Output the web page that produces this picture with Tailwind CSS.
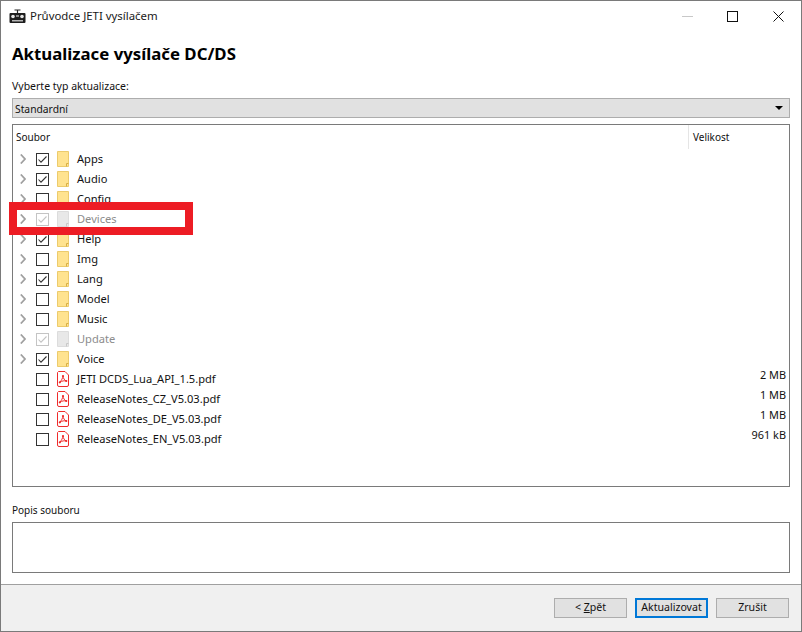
<!DOCTYPE html>
<html lang="cs">
<head>
  <title>Průvodce JETI vysílačem</title>
  <meta charset="utf-8">
  <meta name="viewport" content="width=device-width, initial-scale=1">
  <script src="https://cdn.jsdelivr.net/npm/@tailwindcss/browser@4"></script>
</head>
<body class="bg-white">
  <svg class="hidden">
    <symbol id="chevron" viewBox="0 0 6 10"><path d="M0.8 0.5 5 5 0.8 9.5" fill="none" stroke="#a0a0a0" stroke-width="1.8"/></symbol>
    <symbol id="box" viewBox="0 0 13 13"><rect x="0.5" y="0.5" width="12" height="12" fill="#fff" stroke="#333"/></symbol>
    <symbol id="checked" viewBox="0 0 13 13"><rect x="0.5" y="0.5" width="12" height="12" fill="#fff" stroke="#333"/><path d="M2.5 6.5 5 9.2 10.5 3.5" fill="none" stroke="#333" stroke-width="1.1"/></symbol>
    <symbol id="checked-off" viewBox="0 0 13 13"><rect x="0.5" y="0.5" width="12" height="12" fill="#fff" stroke="#c4c4c4"/><path d="M2.5 6.5 5 9.2 10.5 3.5" fill="none" stroke="#c4c4c4" stroke-width="1.1"/></symbol>
    <symbol id="folder" viewBox="0 0 12 16"><path d="M0.5 0.5H11.5V15.5H0.5Z" fill="#ffe38f" stroke="#eccb6c"/><path d="M9.5 15.5V12.5H11.5" fill="#ffe38f" stroke="#d8ae45"/></symbol>
    <symbol id="folder-off" viewBox="0 0 12 16"><path d="M0.5 0.5H11.5V15.5H0.5Z" fill="#e8e8e8" stroke="#dcdcdc"/><path d="M9.5 15.5V12.5H11.5" fill="#e8e8e8" stroke="#c8c8c8"/></symbol>
    <symbol id="pdf" viewBox="0 0 12 16"><path d="M1.5 0.5H8L11.5 4V14A1.5 1.5 0 0 1 10 15.500H2A1.500 1.500 0 0 1 0.500 14V1.500Z" fill="#fff" stroke="#ef2b2b"/><path d="M6 5C5.700 7 4.500 9.500 2.800 11.300 M6 5C6.200 7 7.500 9.500 9.300 10 M2.800 11.300C5 9.800 7.500 9.500 9.300 10" fill="none" stroke="#ef2b2b" stroke-width="1"/><circle cx="2.800" cy="11.300" r="1.100" fill="#ef2b2b"/><circle cx="9.300" cy="10" r="1.100" fill="#ef2b2b"/><circle cx="6" cy="5" r="1.100" fill="#ef2b2b"/></symbol>
  </svg>

  <div class="relative w-[802px] h-[632px] flex flex-col border border-[#7a7a7a] font-['Noto_Sans',sans-serif] text-[11.1px] text-[#111] overflow-hidden">
    <!-- title bar -->
    <div class="flex items-center h-[30px] shrink-0">
      <svg class="ml-[8px] w-[17px] h-[15px]" viewBox="0 0 17 15">
        <path d="M5.500 1H11.500M8.500 1V4" fill="none" stroke="#222" stroke-width="1.200"/>
        <rect x="0.500" y="4" width="16" height="10" rx="1" fill="#1d1d1d"/>
        <circle cx="4" cy="7.500" r="1.800" fill="#e6e6e6"/>
        <circle cx="13" cy="7.500" r="1.800" fill="#e6e6e6"/>
        <rect x="7" y="6" width="3" height="2" fill="#8a8a8a"/>
        <rect x="3" y="11" width="11" height="1.500" fill="#b5b5b5"/>
      </svg>
      <span class="ml-[4px] text-[11.4px] text-[#1a1a1a]">Průvodce JETI vysílačem</span>
      <div class="ml-auto flex items-center">
        <svg class="w-[11px] h-[11px] mr-[34px]" viewBox="0 0 11 11"><path d="M0 5.500H11" stroke="#c8c8c8"/></svg>
        <svg class="w-[11px] h-[11px] mr-[35px]" viewBox="0 0 11 11"><rect x="0.500" y="0.500" width="10" height="10" fill="none" stroke="#111"/></svg>
        <svg class="w-[11px] h-[11px] mr-[17px]" viewBox="0 0 11 11"><path d="M0.500 0.500 10.500 10.500M10.500 0.500 0.500 10.500" fill="none" stroke="#111"/></svg>
      </div>
    </div>

    <!-- content -->
    <div class="flex flex-col flex-1 px-[11px]">
      <h1 class="mt-[10px] h-[26px] leading-[26px] text-[16.8px] font-bold text-black">Aktualizace vysílače DC/DS</h1>
      <div class="mt-[10px] h-[18px] leading-[18px] text-[10.500px]">Vyberte typ aktualizace:</div>
      <div class="mt-[3px] h-[20px] flex items-center justify-between bg-[#e1e1e1] border border-[#adadad] w-[778px] pl-[2px] pr-[6px]">
        <span class="text-[10.300px] mt-[3px]">Standardní</span>
        <span class="w-0 h-0 border-x-[4px] border-x-transparent border-t-[4px] border-t-black"></span>
      </div>

      <div class="mt-[6px] h-[363px] w-[778px] border border-[#7a7a7a] flex flex-col">
        <div class="flex h-[24px] shrink-0 text-[10px]">
          <div class="w-[675px] pl-[3px] leading-[24px]">Soubor</div>
          <div class="flex-1 border-l border-[#e5e5e5] pl-[4px] leading-[24px]">Velikost</div>
        </div>
        <div class="flex items-center h-[20px]"><svg class="ml-[7px] w-[6px] h-[10px]"><use href="#chevron"/></svg><svg class="ml-[10px] w-[13px] h-[13px]"><use href="#checked"/></svg><svg class="ml-[8px] w-[12px] h-[16px]"><use href="#folder"/></svg><span class="ml-[8px]">Apps</span></div>
        <div class="flex items-center h-[20px]"><svg class="ml-[7px] w-[6px] h-[10px]"><use href="#chevron"/></svg><svg class="ml-[10px] w-[13px] h-[13px]"><use href="#checked"/></svg><svg class="ml-[8px] w-[12px] h-[16px]"><use href="#folder"/></svg><span class="ml-[8px]">Audio</span></div>
        <div class="flex items-center h-[20px]"><svg class="ml-[7px] w-[6px] h-[10px]"><use href="#chevron"/></svg><svg class="ml-[10px] w-[13px] h-[13px]"><use href="#box"/></svg><svg class="ml-[8px] w-[12px] h-[16px]"><use href="#folder"/></svg><span class="ml-[8px]">Config</span></div>
        <div class="flex items-center h-[20px]"><svg class="ml-[7px] w-[6px] h-[10px]"><use href="#chevron"/></svg><svg class="ml-[10px] w-[13px] h-[13px]"><use href="#checked-off"/></svg><svg class="ml-[8px] w-[12px] h-[16px]"><use href="#folder-off"/></svg><span class="ml-[8px] text-[#8c8c8c]">Devices</span></div>
        <div class="flex items-center h-[20px]"><svg class="ml-[7px] w-[6px] h-[10px]"><use href="#chevron"/></svg><svg class="ml-[10px] w-[13px] h-[13px]"><use href="#checked"/></svg><svg class="ml-[8px] w-[12px] h-[16px]"><use href="#folder"/></svg><span class="ml-[8px]">Help</span></div>
        <div class="flex items-center h-[20px]"><svg class="ml-[7px] w-[6px] h-[10px]"><use href="#chevron"/></svg><svg class="ml-[10px] w-[13px] h-[13px]"><use href="#box"/></svg><svg class="ml-[8px] w-[12px] h-[16px]"><use href="#folder"/></svg><span class="ml-[8px]">Img</span></div>
        <div class="flex items-center h-[20px]"><svg class="ml-[7px] w-[6px] h-[10px]"><use href="#chevron"/></svg><svg class="ml-[10px] w-[13px] h-[13px]"><use href="#checked"/></svg><svg class="ml-[8px] w-[12px] h-[16px]"><use href="#folder"/></svg><span class="ml-[8px]">Lang</span></div>
        <div class="flex items-center h-[20px]"><svg class="ml-[7px] w-[6px] h-[10px]"><use href="#chevron"/></svg><svg class="ml-[10px] w-[13px] h-[13px]"><use href="#box"/></svg><svg class="ml-[8px] w-[12px] h-[16px]"><use href="#folder"/></svg><span class="ml-[8px]">Model</span></div>
        <div class="flex items-center h-[20px]"><svg class="ml-[7px] w-[6px] h-[10px]"><use href="#chevron"/></svg><svg class="ml-[10px] w-[13px] h-[13px]"><use href="#box"/></svg><svg class="ml-[8px] w-[12px] h-[16px]"><use href="#folder"/></svg><span class="ml-[8px]">Music</span></div>
        <div class="flex items-center h-[20px]"><svg class="ml-[7px] w-[6px] h-[10px]"><use href="#chevron"/></svg><svg class="ml-[10px] w-[13px] h-[13px]"><use href="#checked-off"/></svg><svg class="ml-[8px] w-[12px] h-[16px]"><use href="#folder-off"/></svg><span class="ml-[8px] text-[#8c8c8c]">Update</span></div>
        <div class="flex items-center h-[20px]"><svg class="ml-[7px] w-[6px] h-[10px]"><use href="#chevron"/></svg><svg class="ml-[10px] w-[13px] h-[13px]"><use href="#checked"/></svg><svg class="ml-[8px] w-[12px] h-[16px]"><use href="#folder"/></svg><span class="ml-[8px]">Voice</span></div>
        <div class="flex items-center h-[20px]"><svg class="ml-[23px] w-[13px] h-[13px]"><use href="#box"/></svg><svg class="ml-[8px] w-[12px] h-[16px]"><use href="#pdf"/></svg><span class="ml-[8px]">JETI DCDS_Lua_API_1.5.pdf</span><span class="ml-auto mr-[3px] mb-[7px] text-[10.900px]">2 MB</span></div>
        <div class="flex items-center h-[20px]"><svg class="ml-[23px] w-[13px] h-[13px]"><use href="#box"/></svg><svg class="ml-[8px] w-[12px] h-[16px]"><use href="#pdf"/></svg><span class="ml-[8px]">ReleaseNotes_CZ_V5.03.pdf</span><span class="ml-auto mr-[3px] mb-[7px] text-[10.900px]">1 MB</span></div>
        <div class="flex items-center h-[20px]"><svg class="ml-[23px] w-[13px] h-[13px]"><use href="#box"/></svg><svg class="ml-[8px] w-[12px] h-[16px]"><use href="#pdf"/></svg><span class="ml-[8px]">ReleaseNotes_DE_V5.03.pdf</span><span class="ml-auto mr-[3px] mb-[7px] text-[10.900px]">1 MB</span></div>
        <div class="flex items-center h-[20px]"><svg class="ml-[23px] w-[13px] h-[13px]"><use href="#box"/></svg><svg class="ml-[8px] w-[12px] h-[16px]"><use href="#pdf"/></svg><span class="ml-[8px]">ReleaseNotes_EN_V5.03.pdf</span><span class="ml-auto mr-[3px] mb-[7px] text-[10.900px]">961 kB</span></div>
      </div>

      <div class="mt-[13px] h-[20px] leading-[20px] text-[10px]">Popis souboru</div>
      <div class="mt-[2px] h-[51px] w-[778px] border border-[#7a7a7a]"></div>
    </div>

    <!-- footer -->
    <div class="h-[47px] shrink-0 bg-[#f0f0f0] border-t border-[#a0a0a0] flex justify-end gap-[8px] pt-[13px] pr-[12px] text-[10.600px]">
      <div class="w-[73px] h-[20px] flex items-center justify-center bg-[#e1e1e1] border border-[#adadad]"><span>&lt; <span class="underline">Z</span>pět</span></div>
      <div class="w-[73px] h-[20px] flex items-center justify-center bg-[#e1e1e1] border-2 border-[#0078d7]">Aktualizovat</div>
      <div class="w-[73px] h-[20px] flex items-center justify-center bg-[#e1e1e1] border border-[#adadad]">Zrušit</div>
    </div>

    <!-- red annotation drawn over the tree -->
    <div class="absolute left-[8px] top-[201px] w-[184px] h-[33px] border-[8px] border-[#ed1c24]"></div>
  </div>
</body>
</html>
